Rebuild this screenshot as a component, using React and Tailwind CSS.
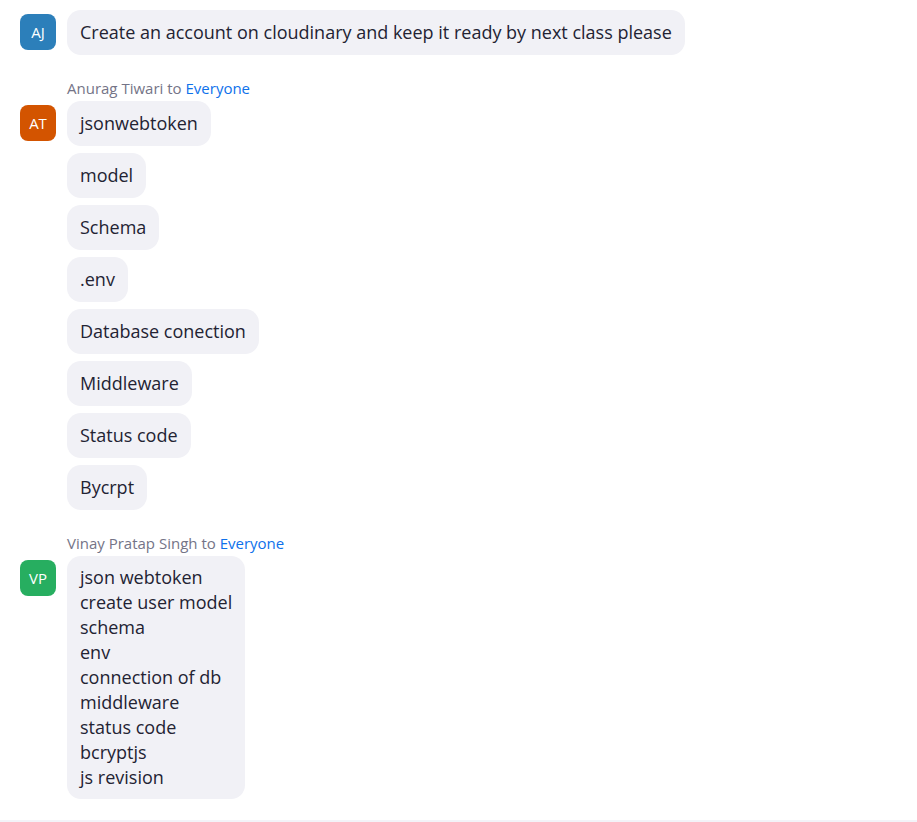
const messages = [
  {
    initials: "AJ",
    color: "bg-[#2c7fba]",
    items: ["Create an account on cloudinary and keep it ready by next class please"],
  },
  {
    initials: "AT",
    color: "bg-[#d35400]",
    name: "Anurag Tiwari",
    items: [
      "jsonwebtoken",
      "model",
      "Schema",
      ".env",
      "Database conection",
      "Middleware",
      "Status code",
      "Bycrpt",
    ],
  },
  {
    initials: "VP",
    color: "bg-[#27ae60]",
    name: "Vinay Pratap Singh",
    items: [
      "json webtoken\ncreate user model\nschema\nenv\nconnection of db\nmiddleware\nstatus code\nbcryptjs\njs revision",
    ],
  },
];

const Bubble = ({ text }) => {
  const multi = text.includes("\n");
  return (
    <div
      className={`w-fit whitespace-pre-line rounded-[14px] bg-[#f1f1f6] px-[13px] text-[18px] leading-[25px] text-[#232333] ${
        multi ? "py-[9px]" : "py-[10px]"
      }`}
    >
      {text}
    </div>
  );
};

export default function App() {
  return (
    <div
      className="flex h-[822px] flex-col overflow-hidden bg-white"
      style={{ fontFamily: '"Open Sans", "Noto Sans", sans-serif' }}
    >
      <div className="flex flex-1 flex-col gap-[24px] px-5 pt-[10px]">
        {messages.map((msg) => (
          <div key={msg.initials}>
            {msg.name ? (
              <div className="mb-[3px] pl-[47px] text-[15px] leading-[19px] text-[#747487]">
                {msg.name} to <span className="text-[#0e71eb]">Everyone</span>
              </div>
            ) : null}
            <div className="flex gap-[11px]">
              <div
                className={`mt-1 flex h-9 w-9 shrink-0 items-center justify-center rounded-lg text-[15px] text-white ${msg.color}`}
              >
                {msg.initials}
              </div>
              <div className="flex flex-col gap-[7px]">
                {msg.items.map((item) => (
                  <Bubble key={item} text={item} />
                ))}
              </div>
            </div>
          </div>
        ))}
      </div>
      <div className="h-[2px] bg-[#f3f3f8]" />
    </div>
  );
}
